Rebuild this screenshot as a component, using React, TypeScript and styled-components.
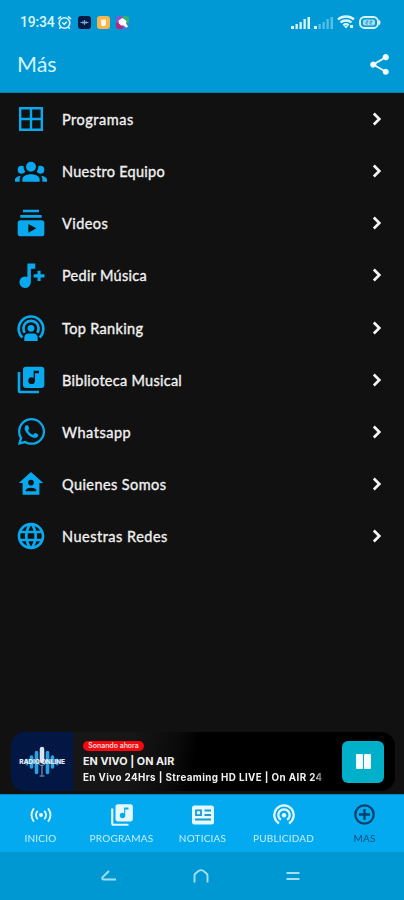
import React from "react";
import styled, { createGlobalStyle } from "styled-components";
import { MdSubscriptions, MdLibraryMusic, MdLanguage, MdShare } from "react-icons/md";
import { FaWhatsapp } from "react-icons/fa";

const Global = createGlobalStyle`
  * { box-sizing: border-box; }
  body { margin: 0; background: #111; }
`;

const Screen = styled.div`
  width: 404px;
  height: 900px;
  display: flex;
  flex-direction: column;
  overflow: hidden;
  background: #111;
  color: #f0f0f0;
  font-family: Lato, "Open Sans", sans-serif;
`;

const StatusBar = styled.div`
  height: 40px;
  flex: none;
  padding: 4px 23px 0 20px;
  display: flex;
  align-items: center;
  background: #0099d5;
  color: #d9f5ff;
`;

const Clock = styled.span`
  width: 37px;
  font: 500 14px/20px Roboto, sans-serif;
  letter-spacing: -0.2px;
  white-space: nowrap;
`;

const StatusIcons = styled.div`
  display: flex;
  align-items: center;
  gap: 6px;
`;

const SignalIcons = styled.div`
  margin-left: auto;
  display: flex;
  align-items: center;
  gap: 4px;
`;

const Header = styled.header`
  height: 53px;
  flex: none;
  padding: 0 12px 4px 17px;
  display: flex;
  align-items: center;
  justify-content: space-between;
  background: #0099d5;
  border-bottom: 1px solid #087eae;
`;

const Title = styled.h1`
  margin: 0;
  font-size: 21.5px;
  line-height: 28px;
  font-weight: 400;
  color: #d4f3ff;
`;

const Menu = styled.nav`
  flex: 1;
  display: flex;
  flex-direction: column;
`;

const MenuRow = styled.a`
  height: 52.15px;
  padding: 0 22px 0 15px;
  display: flex;
  align-items: center;
`;

const IconSlot = styled.span`
  width: 32px;
  height: 32px;
  margin-right: 15px;
  display: flex;
  align-items: center;
  justify-content: center;
  color: #08a9ee;
`;

const MenuLabel = styled.span<{ $track: number }>`
  flex: 1;
  padding-top: 2px;
  font-size: 14.5px;
  line-height: 20px;
  letter-spacing: ${(p) => p.$track}px;
  -webkit-text-stroke: 0.35px currentColor;
`;

const Player = styled.section`
  height: 59px;
  flex: none;
  margin: 0 9px 3px 11px;
  padding-right: 11px;
  display: flex;
  align-items: center;
  border-radius: 14px;
  overflow: hidden;
  background: linear-gradient(100deg, #161616 0 31%, #0a0a0a 43%, #000 48%);
`;

const Cover = styled.div`
  width: 62px;
  height: 59px;
  flex: none;
  display: grid;
  place-items: center;
  background: #021743;
  & > * { grid-area: 1 / 1; }
`;

const CoverText = styled.span`
  z-index: 1;
  font: 800 6.6px/8px Inter, sans-serif;
  letter-spacing: -0.15px;
  white-space: nowrap;
  color: #e2edf8;
`;

const TrackInfo = styled.div`
  flex: 1;
  min-width: 0;
  height: 59px;
  padding: 9px 0 0 10px;
  font-family: Inter, sans-serif;
`;

const NowPlaying = styled.div`
  width: 61px;
  height: 10px;
  border-radius: 5px;
  background: #f50810;
  color: #ffe4e4;
  font-size: 7px;
  font-weight: 500;
  line-height: 10px;
  letter-spacing: -0.02px;
  text-align: center;
  white-space: nowrap;
`;

const TrackTitle = styled.div`
  margin-top: 4px;
  font-size: 10.8px;
  font-weight: 700;
  line-height: 13px;
  letter-spacing: 0.03px;
`;

const TrackDetail = styled.div`
  margin-top: 3px;
  width: 245px;
  white-space: nowrap;
  font-size: 9.8px;
  font-weight: 700;
  line-height: 13px;
  letter-spacing: 0.4px;
  mask-image: linear-gradient(90deg, #000 94%, transparent);
`;

const PauseButton = styled.button`
  width: 42px;
  height: 42px;
  flex: none;
  padding: 0;
  border: 0;
  border-radius: 6px;
  display: flex;
  align-items: center;
  justify-content: center;
  gap: 1px;
  background: #00afca;
`;

const PauseBar = styled.span`
  width: 7px;
  height: 15px;
  border-radius: 1px;
  background: #f5ffff;
`;

const Tabs = styled.nav`
  height: 58px;
  flex: none;
  padding-top: 9px;
  display: grid;
  grid-template-columns: repeat(5, 81px);
  background: #03aaf0;
  border-top: 1px solid #0785ba;
`;

const Tab = styled.a<{ $active?: boolean }>`
  display: flex;
  flex-direction: column;
  align-items: center;
  color: ${(p) => (p.$active ? "#07406b" : "#e3f8ff")};
`;

const TabIcon = styled.span`
  height: 21px;
  display: flex;
  align-items: center;
`;

const TabLabel = styled.span`
  margin-top: 7px;
  font-size: 10px;
  line-height: 12px;
  letter-spacing: 0.2px;
  opacity: 0.88;
`;

const SystemNav = styled.div`
  height: 48px;
  flex: none;
  padding: 0 65px 0 63px;
  display: grid;
  grid-template-columns: repeat(3, 1fr);
  place-items: center;
  background: #0098d3;
`;

const WindowIcon = () => (
  <svg width="24" height="24" viewBox="0 0 24 24" fill="none" stroke="currentColor" strokeWidth="2.4">
    <path d="M1.2 1.2h21.6v21.6H1.2zM12 1v22M1 12h22" />
  </svg>
);

const GroupIcon = () => (
  <svg width="32" height="32" viewBox="0 0 24 24" fill="currentColor">
    <path d="M12 5a3.700 3.700 0 1 1 0 7.500 3.700 3.700 0 0 1 0-7.500M5 8c.56 0 1.08.15 1.53.42-.15 1.43.27 2.85 1.13 3.96C7.16 13.34 6.16 14 5 14a3 3 0 0 1 0-6M19 8a3 3 0 0 1 0 6c-1.16 0-2.16-.66-2.66-1.62.86-1.11 1.28-2.53 1.13-3.96.45-.27.97-.42 1.53-.42M5.500 18.250c0-2.070 2.910-3.750 6.500-3.750s6.500 1.680 6.500 3.750V20h-13zM0 20v-1.500c0-1.390 1.890-2.560 4.450-2.900-.59.680-.95 1.620-.95 2.650V20zM24 20h-3.500v-1.750c0-1.030-.36-1.970-.95-2.650 2.560.340 4.450 1.510 4.450 2.900z" />
  </svg>
);

const NotePlusIcon = () => (
  <svg width="32" height="32" viewBox="0 0 24 24" fill="currentColor">
    <path d="M9.300 3.400v10.100A4.300 4.300 0 1 0 11.900 17.300V7.400H15.200V3.400zM16.900 8.900h2.300v2.600h2.900v2.300h-2.900v2.700h-2.300v-2.700h-2.900v-2.300h2.900z" />
  </svg>
);

const RankingIcon = () => (
  <svg width="28" height="28" viewBox="0 0 28 28" fill="none" stroke="currentColor" strokeWidth="2.700">
    <path d="M5.300 23.500A12.300 12.300 0 1 1 22.700 23.500" />
    <path d="M7.800 18.800A7.600 7.600 0 1 1 20.200 18.800" />
    <circle cx="14" cy="14.300" r="3.400" fill="currentColor" stroke="none" />
    <path d="M7.300 27v-3.300c0-2.500 1.700-4.200 4-4.200h5.400c2.300 0 4 1.700 4 4.200V27z" fill="currentColor" stroke="none" />
  </svg>
);

const HomePersonIcon = () => (
  <svg width="32" height="32" viewBox="0 0 24 24" fill="currentColor" fillRule="evenodd">
    <path d="M12 3 2.800 11.200h2.900V20h12.600v-8.800h2.900zM12 8.900a2.100 2.100 0 1 0 0 4.200 2.100 2.100 0 0 0 0-4.200M8 17.500v-.6c0-1.300 1.800-2.100 4-2.100s4 .8 4 2.100v.6z" />
  </svg>
);

const Chevron = () => (
  <svg width="10" height="14" viewBox="0 0 10 14" fill="none" stroke="#f4f4f4" strokeWidth="2.700">
    <path d="M1.800 1.500 7.300 7l-5.500 5.500" />
  </svg>
);

const AlarmIcon = () => (
  <svg width="15" height="15" viewBox="0 0 15 15" fill="none" stroke="currentColor" strokeWidth="1.600">
    <circle cx="7.500" cy="8" r="5.300" />
    <path d="M1 4l3-2.600M14 4l-3-2.600M5.300 7.500l2 1.900 2.500-2.700M3.800 12l-1.500 1.800M11.200 12l1.500 1.800" />
  </svg>
);

const NavyAppIcon = () => (
  <svg width="13" height="13" viewBox="0 0 13 13">
    <rect width="13" height="13" rx="3" fill="#041943" />
    <path d="M2.500 6.500h8M5 5v3M6.500 4v5M8 5v3" stroke="#74a8cf" strokeWidth="1" />
  </svg>
);

const AmberAppIcon = () => (
  <svg width="13" height="13" viewBox="0 0 13 13">
    <rect width="13" height="13" rx="3" fill="#f8b54b" />
    <path d="M4 3.500h5v5.200L7.800 10H5.200L4 8.700z" fill="#fff6df" />
  </svg>
);

const ColorAppIcon = () => (
  <svg width="13" height="13" viewBox="0 0 13 13">
    <rect width="13" height="13" rx="3" fill="#8557c8" />
    <path d="M7 0h3a3 3 0 0 1 3 3v4H7z" fill="#28b96c" />
    <path d="M0 7h7v6H3a3 3 0 0 1-3-3z" fill="#bb2778" />
    <path d="M7 7h6v3a3 3 0 0 1-3 3H7z" fill="#477bd7" />
    <path d="m2.500 4.500 4-2.500 4 3-.5 2.500 2 3-1.700 1.200L7.800 9.500 5 9.500 3 7.500z" fill="#fff" />
  </svg>
);

const Bars = ({ faint = false }: { faint?: boolean }) => (
  <svg width="19" height="13" viewBox="0 0 19 13" fill="currentColor">
    <path d="M0 10h3v3H0z" />
    <g opacity={faint ? 0.4 : 1}>
      <path d="M4.500 8h2.300v5h-2.300zM8.500 6h2.300v7h-2.300zM12.500 3h2.300v10h-2.300zM16.500 1h2.500v12h-2.500z" />
    </g>
  </svg>
);

const WifiIcon = () => (
  <svg width="18" height="14" viewBox="0 0 18 14" fill="none" stroke="currentColor" strokeWidth="2.300">
    <path d="M1 4.500c4.500-4 11.500-4 16 0M3.500 7.500c3-2.700 8-2.700 11 0M6.300 10.300c1.500-1.300 3.900-1.300 5.400 0" />
    <path d="m7 11 2 2.500 2-2.500zM13 10h3v3h-3z" fill="currentColor" stroke="none" />
  </svg>
);

const BatteryIcon = () => (
  <svg width="22" height="13" viewBox="0 0 22 13">
    <rect x="1" y="1" width="18" height="11" rx="4.500" fill="none" stroke="currentColor" strokeWidth="1.900" />
    <rect x="4" y="3.500" width="12" height="6" rx="2" fill="currentColor" opacity=".75" />
    <path d="M7 5h2v1H7v2h2M11 5h2v1h-2v2h2" stroke="#168fc0" strokeWidth=".7" fill="none" />
    <path d="M20 4.500q1.500 2 0 4" stroke="currentColor" strokeWidth="1.500" fill="none" />
  </svg>
);

const CoverArt = () => (
  <svg width="46" height="34" viewBox="0 0 46 34" strokeLinecap="round" fill="none">
    <path d="M8 15v4M38 15v4" stroke="#2185c6" strokeWidth="3" />
    <path d="M12.500 12v10M17.500 7.500v20M28.500 7.500v20M33.500 12v10" stroke="#2ca1df" strokeWidth="3.600" />
    <path d="M23 4v12" stroke="#d8e5ef" strokeWidth="4.500" />
    <path d="M19 16c0 6 8 6 8 0M23 21v9M21 31h4" stroke="#8daac8" strokeWidth="1" />
  </svg>
);

const BroadcastIcon = () => (
  <svg width="22" height="16" viewBox="0 0 22 16" fill="none" stroke="currentColor" strokeWidth="1.900" strokeLinecap="round">
    <circle cx="11" cy="8" r="2" fill="currentColor" stroke="none" />
    <path d="M7.200 4.500q-2.500 3.500 0 7M14.800 4.500q2.500 3.500 0 7M3.500 2q-4 6 0 12M18.500 2q4 6 0 12" />
  </svg>
);

const NewsIcon = () => (
  <svg width="22" height="20" viewBox="0 0 22 20">
    <rect x="0" y="0.500" width="22" height="19" rx="2.500" fill="currentColor" />
    <path d="M4 5.300h5v4.900H4zM12.500 5.500H19M12.500 10H19M3 14.500h16" fill="none" stroke="#1a9bd4" strokeWidth="1.800" />
  </svg>
);

const TetheringIcon = () => (
  <svg width="22" height="21" viewBox="0 0 22 21" fill="none" stroke="currentColor" strokeWidth="2.300">
    <path d="M6 19.400A9.700 9.700 0 1 1 16 19.400" />
    <path d="M7.900 15.800A5.700 5.700 0 1 1 14.100 15.800" />
    <circle cx="11" cy="11.300" r="2.200" fill="currentColor" stroke="none" />
  </svg>
);

const PlusCircleIcon = () => (
  <svg width="21" height="21" viewBox="0 0 21 21" fill="none" stroke="currentColor" strokeWidth="2.300">
    <circle cx="10.500" cy="10.500" r="9.200" />
    <path d="M10.500 5v11M5 10.500h11" />
  </svg>
);

const menuItems = [
  { label: "Programas", icon: <WindowIcon />, track: 0.52 },
  { label: "Nuestro Equipo", icon: <GroupIcon />, track: 0.27 },
  { label: "Videos", icon: <MdSubscriptions size={32} />, track: 0.42 },
  { label: "Pedir Música", icon: <NotePlusIcon />, track: 0.28 },
  { label: "Top Ranking", icon: <RankingIcon />, track: 0.34 },
  { label: "Biblioteca Musical", icon: <MdLibraryMusic size={32} />, track: 0.27 },
  { label: "Whatsapp", icon: <FaWhatsapp size={31} />, track: 0.52 },
  { label: "Quienes Somos", icon: <HomePersonIcon />, track: 0.42 },
  { label: "Nuestras Redes", icon: <MdLanguage size={32} />, track: 0.5 },
];

const tabs = [
  { label: "INICIO", icon: <BroadcastIcon /> },
  { label: "PROGRAMAS", icon: <MdLibraryMusic size={26} /> },
  { label: "NOTICIAS", icon: <NewsIcon /> },
  { label: "PUBLICIDAD", icon: <TetheringIcon /> },
  { label: "MAS", icon: <PlusCircleIcon />, active: true },
];

export default function App() {
  return (
    <>
      <Global />
      <Screen>
        <StatusBar>
          <Clock>19:34</Clock>
          <StatusIcons>
            <AlarmIcon />
            <NavyAppIcon />
            <AmberAppIcon />
            <ColorAppIcon />
          </StatusIcons>
          <SignalIcons>
            <Bars />
            <Bars faint />
            <WifiIcon />
            <BatteryIcon />
          </SignalIcons>
        </StatusBar>
        <Header>
          <Title>Más</Title>
          <MdShare size={25} color="#f3fcff" />
        </Header>
        <Menu>
          {menuItems.map((item) => (
            <MenuRow key={item.label}>
              <IconSlot>{item.icon}</IconSlot>
              <MenuLabel $track={item.track}>{item.label}</MenuLabel>
              <Chevron />
            </MenuRow>
          ))}
        </Menu>
        <Player>
          <Cover>
            <CoverArt />
            <CoverText>RADIO ONLINE</CoverText>
          </Cover>
          <TrackInfo>
            <NowPlaying>Sonando ahora</NowPlaying>
            <TrackTitle>EN VIVO | ON AIR</TrackTitle>
            <TrackDetail>En Vivo 24Hrs | Streaming HD LIVE | On AIR 24</TrackDetail>
          </TrackInfo>
          <PauseButton aria-label="Pausar">
            <PauseBar />
            <PauseBar />
          </PauseButton>
        </Player>
        <Tabs>
          {tabs.map((tab) => (
            <Tab key={tab.label} $active={tab.active}>
              <TabIcon>{tab.icon}</TabIcon>
              <TabLabel>{tab.label}</TabLabel>
            </Tab>
          ))}
        </Tabs>
        <SystemNav>
          <svg width="18" height="14" viewBox="0 0 18 14" fill="none" stroke="#a3dff4" strokeWidth="1.900">
            <path d="M9 2 2.500 8.300Q1.500 10.500 4 10.500h12" />
          </svg>
          <svg width="16" height="16" viewBox="0 0 16 16" fill="none" stroke="#a3dff4" strokeWidth="1.900">
            <path d="M1.500 14.500V7.500Q1.500 6.500 2.500 5.500L5.800 2.800Q8 1.500 10.200 2.800L13.500 5.500Q14.500 6.500 14.500 7.500v7" />
          </svg>
          <svg width="16" height="12" viewBox="0 0 16 12" stroke="#a3dff4" strokeWidth="2">
            <path d="M1.500 3h13M1.500 9h13" />
          </svg>
        </SystemNav>
      </Screen>
    </>
  );
}
